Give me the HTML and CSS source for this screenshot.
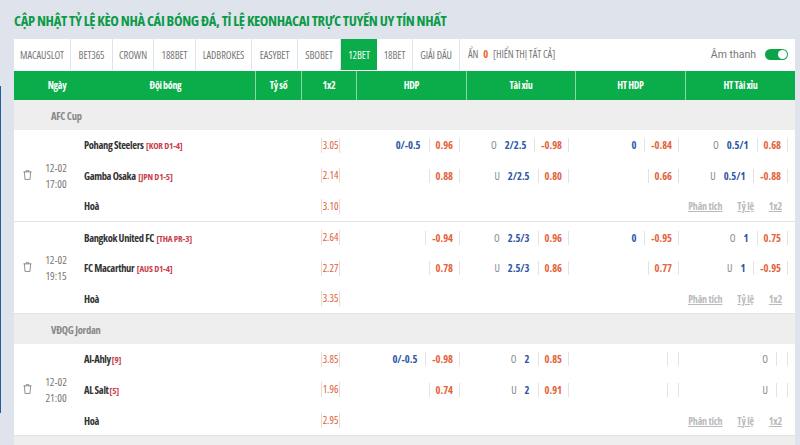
FILE: index.html
```html
<!DOCTYPE html>
<html lang="en">
<head>
    <meta charset="UTF-8">
    <meta name="viewport" content="width=device-width, initial-scale=1.0">
    <title>Keonhacai</title>
    <link rel="stylesheet" href="styles.css">
</head>
<body>
    <div class="edge"></div>
    <div class="wrap">
        <h1>CẬP NHẬT TỶ LỆ KÈO NHÀ CÁI BÓNG ĐÁ, TỈ LỆ KEONHACAI TRỰC TUYẾN UY TÍN NHẤT</h1>
        <div class="tabs">
            <a>MACAUSLOT</a><a>BET365</a><a>CROWN</a><a>188BET</a><a>LADBROKES</a><a>EASYBET</a><a>SBOBET</a><a class="active">12BET</a><a>18BET</a><a>GIẢI ĐẤU</a>
            <div class="hidden-count">ẨN <b>0</b> [HIỂN THỊ TẤT CẢ]</div>
            <div class="sound">Âm thanh <span class="toggle"></span></div>
        </div>
        <div class="head">
            <div class="h-date">Ngày</div>
            <div class="h-team">Đội bóng</div>
            <div class="h-col">Tỷ số</div>
            <div class="h-col">1x2</div>
            <div class="h-col">HDP</div>
            <div class="h-col">Tài xỉu</div>
            <div class="h-col">HT HDP</div>
            <div class="h-col last">HT Tài xỉu</div>
        </div>

        <div class="group">AFC Cup</div>
        <div class="match">
            <div class="when">
                <svg class="trash" viewBox="0 0 10 11"><path d="M0.5 2h9M3.5 2V.7h3V2M1.6 2l.6 8.4h5.6L8.4 2"/></svg>
                <div class="date">12-02<br>17:00</div>
            </div>
            <div class="rows">
                <div class="row">
                    <div class="team">Pohang Steelers <span class="tag">[KOR D1-4]</span></div>
                    <div class="score"></div>
                    <div class="one"><span>3.05</span></div>
                    <div class="mkt"><span class="line">0/-0.5</span><span class="odd">0.96</span></div>
                    <div class="mkt"><span class="side">O</span><span class="line">2/2.5</span><span class="odd">-0.98</span></div>
                    <div class="mkt"><span class="line">0</span><span class="odd">-0.84</span></div>
                    <div class="mkt"><span class="side">O</span><span class="line">0.5/1</span><span class="odd">0.68</span></div>
                </div>
                <div class="row">
                    <div class="team">Gamba Osaka <span class="tag">[JPN D1-5]</span></div>
                    <div class="score"></div>
                    <div class="one"><span>2.14</span></div>
                    <div class="mkt"><span class="odd">0.88</span></div>
                    <div class="mkt"><span class="side">U</span><span class="line">2/2.5</span><span class="odd">0.80</span></div>
                    <div class="mkt"><span class="odd">0.66</span></div>
                    <div class="mkt"><span class="side">U</span><span class="line">0.5/1</span><span class="odd">-0.88</span></div>
                </div>
                <div class="row">
                    <div class="team">Hoà</div>
                    <div class="score"></div>
                    <div class="one"><span>3.10</span></div>
                    <div class="links"><a>Phân tích</a><a>Tỷ lệ</a><a>1x2</a></div>
                </div>
            </div>
        </div>
        <div class="match">
            <div class="when">
                <svg class="trash" viewBox="0 0 10 11"><path d="M0.5 2h9M3.5 2V.7h3V2M1.6 2l.6 8.4h5.6L8.4 2"/></svg>
                <div class="date">12-02<br>19:15</div>
            </div>
            <div class="rows">
                <div class="row">
                    <div class="team">Bangkok United FC <span class="tag">[THA PR-3]</span></div>
                    <div class="score"></div>
                    <div class="one"><span>2.64</span></div>
                    <div class="mkt"><span class="odd">-0.94</span></div>
                    <div class="mkt"><span class="side">O</span><span class="line">2.5/3</span><span class="odd">0.96</span></div>
                    <div class="mkt"><span class="line">0</span><span class="odd">-0.95</span></div>
                    <div class="mkt"><span class="side">O</span><span class="line">1</span><span class="odd">0.75</span></div>
                </div>
                <div class="row">
                    <div class="team">FC Macarthur <span class="tag">[AUS D1-4]</span></div>
                    <div class="score"></div>
                    <div class="one"><span>2.27</span></div>
                    <div class="mkt"><span class="odd">0.78</span></div>
                    <div class="mkt"><span class="side">U</span><span class="line">2.5/3</span><span class="odd">0.86</span></div>
                    <div class="mkt"><span class="odd">0.77</span></div>
                    <div class="mkt"><span class="side">U</span><span class="line">1</span><span class="odd">-0.95</span></div>
                </div>
                <div class="row">
                    <div class="team">Hoà</div>
                    <div class="score"></div>
                    <div class="one"><span>3.35</span></div>
                    <div class="links"><a>Phân tích</a><a>Tỷ lệ</a><a>1x2</a></div>
                </div>
            </div>
        </div>

        <div class="group">VĐQG Jordan</div>
        <div class="match">
            <div class="when">
                <svg class="trash" viewBox="0 0 10 11"><path d="M0.5 2h9M3.5 2V.7h3V2M1.6 2l.6 8.4h5.6L8.4 2"/></svg>
                <div class="date">12-02<br>21:00</div>
            </div>
            <div class="rows">
                <div class="row">
                    <div class="team">Al-Ahly<span class="tag">[9]</span></div>
                    <div class="score"></div>
                    <div class="one"><span>3.85</span></div>
                    <div class="mkt"><span class="line">0/-0.5</span><span class="odd">-0.98</span></div>
                    <div class="mkt"><span class="side">O</span><span class="line">2</span><span class="odd">0.85</span></div>
                    <div class="mkt"><span class="odd empty"></span></div>
                    <div class="mkt"><span class="side">O</span><span class="odd empty"></span></div>
                </div>
                <div class="row">
                    <div class="team">AL Salt<span class="tag">[5]</span></div>
                    <div class="score"></div>
                    <div class="one"><span>1.96</span></div>
                    <div class="mkt"><span class="odd">0.74</span></div>
                    <div class="mkt"><span class="side">U</span><span class="line">2</span><span class="odd">0.91</span></div>
                    <div class="mkt"><span class="odd empty"></span></div>
                    <div class="mkt"><span class="side">U</span><span class="odd empty"></span></div>
                </div>
                <div class="row">
                    <div class="team">Hoà</div>
                    <div class="score"></div>
                    <div class="one"><span>2.95</span></div>
                    <div class="links"><a>Phân tích</a><a>Tỷ lệ</a><a>1x2</a></div>
                </div>
            </div>
        </div>
        <div class="group"></div>
    </div>
</body>
</html>
```

FILE: styles.css
```css
html, body {
    height: 445px;
    overflow: hidden;
}
body {
    margin: 0;
    background: #dfe4ec;
    font-family: "Open Sans", "Liberation Sans", sans-serif;
    font-stretch: 75%;
    color: #333;
}
.edge {
    position: absolute;
    left: 0;
    top: 86px;
    width: 1px;
    height: 327px;
    background: #1f5f9c;
}
.wrap {
    width: 781px;
    margin-left: 14px;
}
h1 {
    margin: 0;
    height: 39px;
    line-height: 41px;
    font-size: 14.5px;
    font-weight: bold;
    letter-spacing: -.35px;
    color: #0c9a48;
    white-space: nowrap;
}
.tabs {
    display: grid;
    grid-template-columns: 57px 42px 41px 42px 56px 46px 43px 36px 36px 47px 1fr auto;
    height: 32px;
    background: #fff;
}
.tabs a {
    display: flex;
    align-items: center;
    justify-content: center;
    height: 31px;
    border-right: 1px solid #dfe4ec;
    font-size: 10.5px;
    letter-spacing: -.1px;
    color: #777;
    box-sizing: border-box;
}
.tabs a.active {
    background: #0aad4a;
    color: #fff;
    border-right: 0;
}
.hidden-count {
    padding-left: 8px;
    line-height: 31px;
    font-size: 10.5px;
    letter-spacing: -.1px;
    color: #777;
}
.hidden-count b {
    color: #e8622f;
    margin: 0 3px;
}
.sound {
    display: flex;
    align-items: center;
    gap: 9px;
    height: 31px;
    padding-right: 7px;
    font-family: "Roboto", sans-serif;
    font-stretch: 88%;
    font-size: 10.5px;
    color: #777;
}
.toggle {
    position: relative;
    width: 23px;
    height: 11px;
    border-radius: 6px;
    background: #0aa54a;
}
.toggle::after {
    content: "";
    position: absolute;
    right: 1px;
    top: 1px;
    width: 9px;
    height: 9px;
    border-radius: 50%;
    background: #fff;
}
.head {
    display: grid;
    grid-template-columns: 62px 180px 46px 55px 110px 109px 110px 109px;
    height: 29px;
    background: #0aad4a;
    color: #fff;
    font-size: 10px;
    font-weight: bold;
    letter-spacing: -.3px;
    line-height: 29px;
    text-align: center;
}
.h-date {
    padding-left: 24px;
}
.h-team, .h-col {
    border-right: 1px solid #8ad6a6;
}
.h-col.last {
    border-right: 0;
}
.group {
    height: 29.5px;
    padding-left: 37px;
    background: #eee;
    color: #888;
    font-size: 10.5px;
    font-weight: bold;
    letter-spacing: -.25px;
    line-height: 33px;
}
.match {
    display: flex;
    height: 92.3px;
    box-sizing: border-box;
    background: #fff;
    border-bottom: 1px solid #e3e3e3;
}
.when {
    display: flex;
    align-items: center;
    width: 70px;
    flex: none;
}
.trash {
    width: 9px;
    height: 10px;
    margin-left: 9px;
    fill: none;
    stroke: #777;
    stroke-width: .9;
}
.date {
    width: 30px;
    margin-left: 9px;
    padding-top: 2px;
    font-size: 11px;
    line-height: 16px;
    text-align: center;
    color: #777;
}
.rows {
    flex: 1;
}
.row {
    display: grid;
    grid-template-columns: 172px 46px 55px 110px 109px 110px 109px;
    height: 30.6px;
    box-sizing: border-box;
    padding-top: 1px;
    align-items: center;
}
.team {
    font-size: 10.5px;
    font-weight: bold;
    letter-spacing: -.35px;
    white-space: nowrap;
}
.tag {
    margin-left: 1px;
    font-size: 9px;
    letter-spacing: -.15px;
    color: #c9404a;
}
.one {
    padding-left: 2px;
    text-align: center;
    font-size: 10.5px;
    font-weight: 500;
    color: #dd5c33;
}
.one span {
    display: inline-block;
    padding: 0 1px;
    line-height: 15px;
    border-left: 1px solid #ecd9d0;
    border-right: 1px solid #ecd9d0;
}
.mkt {
    display: flex;
    align-items: center;
    justify-content: flex-end;
    padding-right: 7px;
    font-size: 10.5px;
    font-weight: bold;
}
.side {
    margin-right: 8px;
    font-weight: normal;
    color: #888;
}
.line {
    margin-right: 8px;
    color: #2b58a8;
}
.odd {
    height: 14px;
    padding: 0 6px;
    line-height: 14px;
    color: #e4633a;
    border-left: 1px solid #e3e3e3;
    border-right: 1px solid #e3e3e3;
}
.odd.empty {
    width: 0;
    padding: 0 5px;
}
.links {
    grid-column: 4 / 8;
    display: flex;
    justify-content: flex-end;
    gap: 15px;
    padding-right: 13px;
    font-size: 10px;
    font-weight: bold;
    letter-spacing: -.2px;
    color: #b8babc;
}
.links a {
    text-decoration: underline;
}
```
